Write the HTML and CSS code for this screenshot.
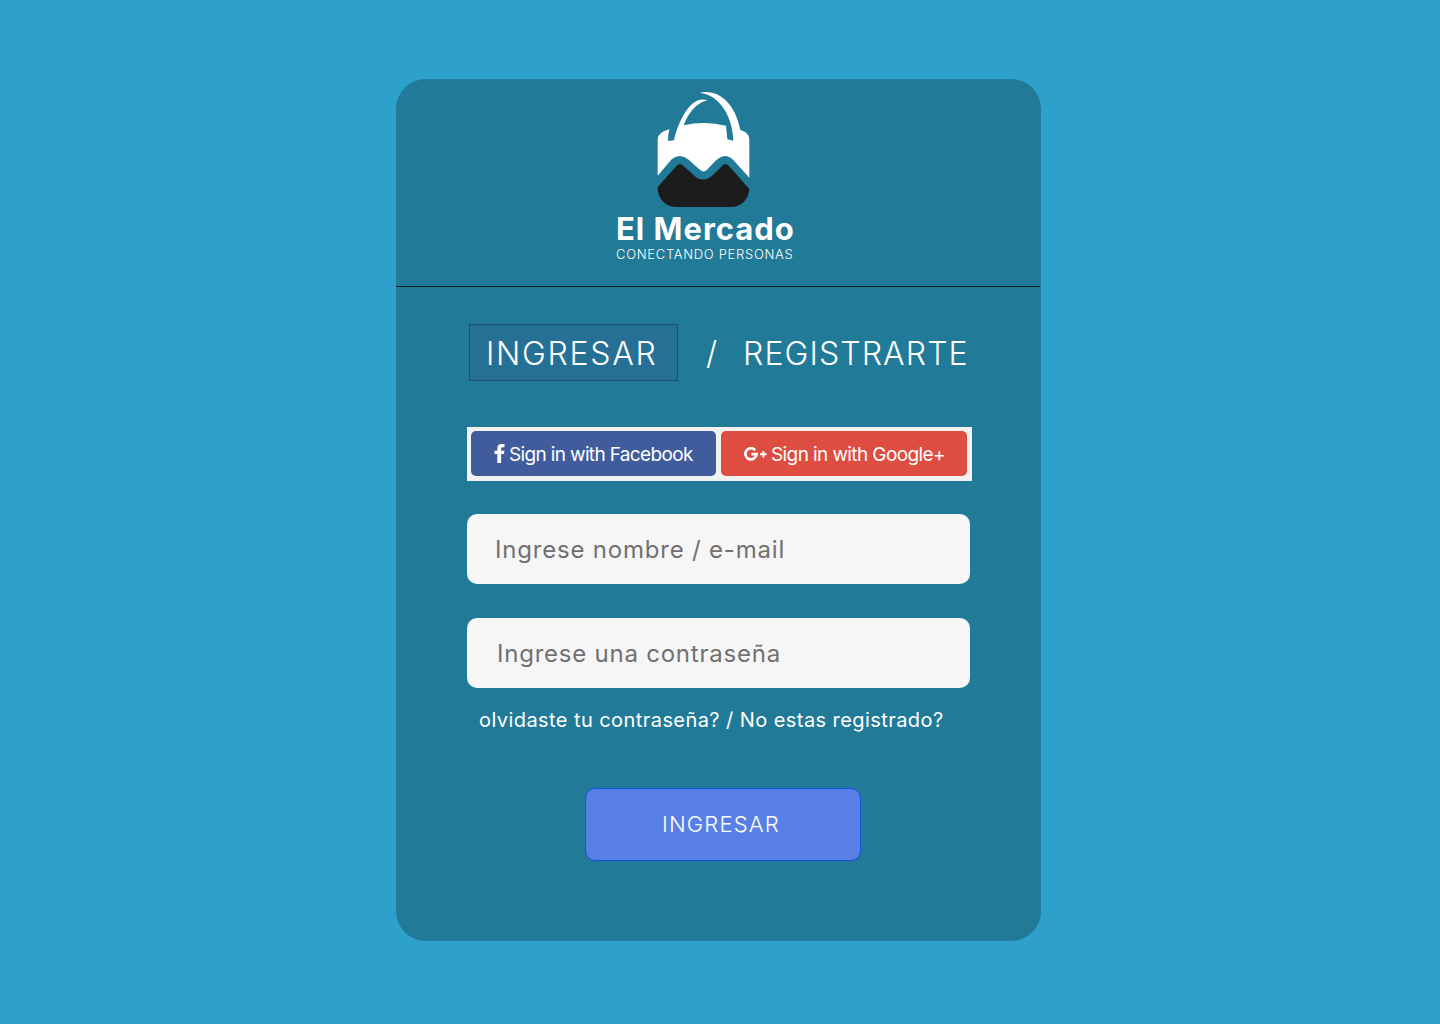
FILE: index.html
```html
<!DOCTYPE html>
<html lang="es">
<head>
<meta charset="utf-8">
<title>El Mercado</title>
<link rel="stylesheet" href="styles.css">
</head>
<body>
<main class="card">
  <header class="brand">
    <svg class="brand-mark" viewBox="0 0 390 405" aria-hidden="true">
      <path fill="#fff" d="M53 287V177Q53 158 88 148Q84 164 84 183L102 181C110 140 148 40 203 61C168 68 145 100 131 136Q193 122 258 137L262 178L280 182C278 110 240 45 179 38C235 26 285 68 301 150Q328 157 328 178V293L282 242Q257 216 230 239L201 269Q190 280 178 268L146 239Q120 218 95 238Z"/>
      <path fill="#1c1c1c" d="M53 321L110 257Q120 247 130 257L163 287Q190 311 219 285L247 257Q257 247 267 258L328 327C326 360 302 381 272 381H108C76 381 53 356 53 321Z"/>
    </svg>
    <h1 class="brand-name">El Mercado</h1>
    <p class="brand-tagline">CONECTANDO PERSONAS</p>
  </header>
  <nav class="tabs">
    <a class="tab tab-active">INGRESAR</a>
    <span class="tab-divider">/</span>
    <a class="tab tab-register">REGISTRARTE</a>
  </nav>
  <div class="social">
    <button class="social-btn facebook" type="button">
      <svg class="icon-facebook" viewBox="0 0 10 19" aria-hidden="true"><path fill="#fff" d="M2.8 19V10H0V6.7H2.8V4.4C2.8 1.5 4.4 0 7.2 0H10V3.2H8.2C6.9 3.2 6.6 3.8 6.6 4.9V6.7H9.9L9.5 10H6.6V19Z"/></svg>
      <span class="label-facebook">Sign in with Facebook</span>
    </button>
    <button class="social-btn google" type="button">
      <svg class="icon-google" viewBox="0 0 23 14" aria-hidden="true"><path fill="none" stroke="#fff" stroke-width="2.7" d="M11.2 3.1A5.6 5.6 0 1 0 12.6 7.2H7.3"/><path fill="none" stroke="#fff" stroke-width="2" d="M16 7.2H22.6M19.3 3.9V10.5"/></svg>
      <span class="label-google">Sign in with Google+</span>
    </button>
  </div>
  <form class="form">
    <input class="field field-user" type="text" placeholder="Ingrese nombre / e-mail">
    <input class="field field-pass" type="password" placeholder="Ingrese una contraseña">
    <p class="help">olvidaste tu contraseña? / No estas registrado?</p>
    <button class="submit" type="button">INGRESAR</button>
  </form>
</main>
</body>
</html>
```
FILE: styles.css
```css
* { box-sizing: border-box; }
body {
  margin: 0;
  min-height: 1024px;
  padding-top: 79px;
  padding-left: 396px;
  background: #2da1cb;
  font-family: Inter, sans-serif;
  color: #fff;
}
.card {
  width: 645px;
  height: 862px;
  border-radius: 30px;
  background: #217a98;
}
.brand {
  width: 644px;
  height: 208px;
  padding-top: 1px;
  border-bottom: 1px solid #171d20;
}
.brand-mark { display: block; width: 130px; height: 135px; margin-left: 244px; }
.brand-name {
  margin: -5px 0 0 220px;
  font: 700 31px/38px Inter, sans-serif;
  letter-spacing: 1px;
  white-space: nowrap;
}
.brand-tagline {
  margin: -2px 0 0 220px;
  font: 300 13px/16px Inter, sans-serif;
  letter-spacing: 0.7px;
  white-space: nowrap;
}
.tabs {
  display: flex;
  align-items: center;
  height: 57px;
  margin: 37px 0 0 73px;
  font-size: 32px;
  font-weight: 300;
  line-height: 57px;
  white-space: nowrap;
}
.tab { letter-spacing: 1.7px; }
.tab-active {
  width: 209px;
  height: 57px;
  padding: 0 0 0 16px;
  border: 1px solid #204d68;
  background: #267096;
}
.tab-divider { width: 37px; margin-left: 28px; }
.tab-register { padding-top: 2px; letter-spacing: 1.1px; }
.social {
  display: flex;
  gap: 5px;
  width: 505px;
  height: 54px;
  margin: 46px 0 0 71px;
  padding: 4px 4px 5px;
  background: #f2f2f3;
}
.social-btn {
  display: flex;
  align-items: center;
  width: 245px;
  height: 45px;
  padding: 0 0 0 23px;
  border: 0;
  border-radius: 5px;
  color: #fff;
  font: 400 19px/23px Inter, sans-serif;
  white-space: nowrap;
}
.facebook { background: #415c9c; }
.google { width: 246px; background: #dd4d42; }
.icon-facebook { width: 11px; height: 19px; margin-right: 4px; }
.icon-google { width: 23px; height: 14px; margin-right: 4px; }
.label-facebook { padding-top: 1px; letter-spacing: -0.65px; }
.label-google { padding-top: 1px; letter-spacing: -0.6px; }
.form { margin: 33px 0 0 71px; }
.field {
  display: block;
  width: 503px;
  height: 70px;
  margin: 0 0 34px;
  padding: 1px 28px 0;
  border: 0;
  border-radius: 10px;
  background: #f6f6f6;
  color: #707070;
  font: 400 24px/30px Inter, sans-serif;
}
.field::placeholder { color: #707070; opacity: 1; }
.field-user { letter-spacing: 0.8px; }
.field-pass { margin-bottom: 18px; padding-left: 30px; letter-spacing: 0.77px; }
.help {
  margin: 0 0 0 12px;
  font-size: 20px;
  font-weight: 400;
  line-height: 28px;
  letter-spacing: 0.43px;
  white-space: nowrap;
}
.submit {
  display: block;
  width: 276px;
  height: 73px;
  margin: 54px 0 0 118px;
  padding: 0 0 2px 76px;
  border: 1px solid #174fe0;
  border-radius: 10px;
  background: #587fe6;
  color: #fff;
  font: 300 22px/28px Inter, sans-serif;
  letter-spacing: 1.15px;
  text-align: left;
}
```
